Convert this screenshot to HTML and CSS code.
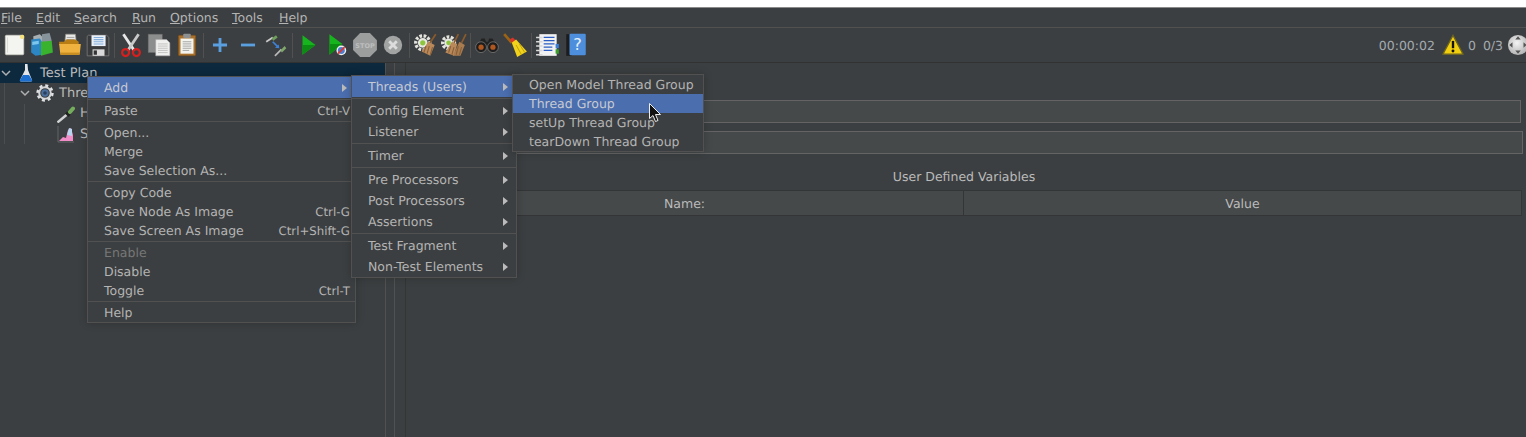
FILE: index.html
```html
<!DOCTYPE html>
<html lang="en">
<head>
    <meta charset="UTF-8">
    <title>Apache JMeter</title>
    <link rel="stylesheet" href="styles.css">
</head>
<body>
    <div class="topband"></div>

    <div class="menubar">
        <span class="m-file"><u>F</u>ile</span>
        <span class="m-edit"><u>E</u>dit</span>
        <span class="m-search"><u>S</u>earch</span>
        <span class="m-run"><u>R</u>un</span>
        <span class="m-options"><u>O</u>ptions</span>
        <span class="m-tools"><u>T</u>ools</span>
        <span class="m-help"><u>H</u>elp</span>
    </div>

    <div class="toolbar">
        <!-- new -->
        <div class="tool"><svg viewBox="0 0 24 24"><rect x="4" y="3" width="17" height="18" rx="1" fill="#f4f4f0" stroke="#cfcfc8" stroke-width=".6"/><circle cx="19.500" cy="4.500" r="2" fill="#f6e27a"/><path d="M6 5v14" stroke="#dcdcd6"/></svg></div>
        <!-- templates -->
        <div class="tool"><svg viewBox="0 0 24 24"><path d="M4 4l6-2 3 3v8H4z" fill="#a6aeb2"/><path d="M12 2l7-1 2 7-9 3z" fill="#87939a"/><path d="M2 7l8-1 2 3v12l-6 1-4-3z" fill="#2c86c4"/><path d="M11 9l10-1 1 11-11 3z" fill="#39b32e"/><path d="M3 9l6-1v3l-6 1z" fill="#7cc6ee"/></svg></div>
        <!-- open -->
        <div class="tool"><svg viewBox="0 0 24 24"><path d="M8 2h9l1 9H7z" fill="#e8e8e6" stroke="#8b8b85" stroke-width=".6"/><path d="M9 5h7M9 7h7" stroke="#999" stroke-width=".8"/><path d="M2 9h5l1-2h9l3 2v3H2z" fill="#b87e14"/><path d="M2 11h20l-1 9a1 1 0 0 1-1 1H4a1 1 0 0 1-1-1z" fill="#efb23e"/><path d="M3 19h18v2H3z" fill="#c98d20"/></svg></div>
        <!-- save -->
        <div class="tool"><svg viewBox="0 0 24 24"><path d="M3 3h17l2 2v17H2V4z" fill="#3a3b3d" stroke="#8a8a8a" stroke-width=".6"/><rect x="6" y="3" width="13" height="10" fill="#e9f0f8"/><path d="M8 5h9M8 7h9M8 9h9M8 11h9" stroke="#86aedb"/><rect x="7" y="16" width="11" height="6" fill="#d9d9d9"/><rect x="8" y="17" width="3" height="4" fill="#333"/></svg></div>
        <div class="tsep"></div>
        <!-- cut -->
        <div class="tool"><svg viewBox="0 0 24 24"><path d="M5 2l10 15" stroke="#e8e8e8" stroke-width="2.600"/><path d="M19 2L9 17" stroke="#c9c9c9" stroke-width="2.600"/><circle cx="7" cy="19" r="3.200" fill="none" stroke="#d81f1f" stroke-width="2"/><circle cx="17" cy="19" r="3.200" fill="none" stroke="#d81f1f" stroke-width="2"/></svg></div>
        <!-- copy -->
        <div class="tool"><svg viewBox="0 0 24 24"><rect x="2" y="2" width="13" height="17" fill="#8c8e8e" stroke="#666" stroke-width=".5"/><path d="M9 7h10l3 3v12H9z" fill="#f0f0ee" stroke="#aaa" stroke-width=".5"/><path d="M11 11h9M11 13h9M11 15h9M11 17h9M11 19h9" stroke="#b5b5b5" stroke-width=".7"/></svg></div>
        <!-- paste -->
        <div class="tool"><svg viewBox="0 0 24 24"><rect x="4" y="3" width="16" height="19" rx="1" fill="#a9702c" stroke="#6e4716" stroke-width=".5"/><rect x="6" y="6" width="12" height="14" fill="#f3f3f0"/><rect x="8.500" y="1.500" width="7" height="4" rx="1" fill="#8d9090"/><path d="M8 9h8M8 11h8M8 13h8M8 15h8M8 17h6" stroke="#9a9a9a" stroke-width=".8"/></svg></div>
        <div class="tsep"></div>
        <!-- expand -->
        <div class="tool"><svg viewBox="0 0 24 24"><path d="M12 5.500v13M5.500 12h13" stroke="#5a9fe0" stroke-width="2.600"/></svg></div>
        <!-- collapse -->
        <div class="tool"><svg viewBox="0 0 24 24"><path d="M5.500 12h13" stroke="#5a9fe0" stroke-width="2.600"/></svg></div>
        <!-- toggle -->
        <div class="tool"><svg viewBox="0 0 24 24"><path d="M3 9l6-4" stroke="#c9c9c9" stroke-width="1.600"/><path d="M8 6l4-3 1.500 2-4 3z" fill="#6f9f5c"/><path d="M11 22l6-6" stroke="#b9b9b9" stroke-width="1.600"/><path d="M16 17l4-4 1.500 2-4 4z" fill="#7fa96c"/><path d="M9 9l5 5" stroke="#3d82d6" stroke-width="1.600"/><path d="M15 15l-4-.500 3.500-3z" fill="#3d82d6"/></svg></div>
        <div class="tsep"></div>
        <!-- start -->
        <div class="tool"><svg viewBox="0 0 24 24"><path d="M6 3l12 9-12 9z" fill="#17b51d"/><path d="M6 12h12L6 21z" fill="#0d8c14"/></svg></div>
        <!-- start no pauses -->
        <div class="tool"><svg viewBox="0 0 24 24"><path d="M5 2l12 9-12 10z" fill="#17b51d"/><path d="M5 11h12L5 21z" fill="#0d8c14"/><circle cx="16" cy="17" r="4.500" fill="#f2f2f2"/><circle cx="16" cy="17" r="3.200" fill="#4c7fd0"/><path d="M13 20l6-6" stroke="#e0342c" stroke-width="1.500"/></svg></div>
        <!-- stop -->
        <div class="tool"><svg viewBox="0 0 24 24"><path d="M7.500 1h9L23 7.500v9L16.500 23h-9L1 16.500v-9z" fill="#9c9e9e"/><text x="12" y="14.500" class="stoptext">STOP</text></svg></div>
        <!-- shutdown -->
        <div class="tool"><svg viewBox="0 0 24 24"><circle cx="12" cy="12" r="8.500" fill="#a2a4a4"/><path d="M8.500 8.500l7 7M15.500 8.500l-7 7" stroke="#dcdcdc" stroke-width="2.600"/></svg></div>
        <div class="tsep"></div>
        <!-- clear -->
        <div class="tool"><svg viewBox="0 0 24 24"><circle cx="9" cy="10" r="6.500" fill="none" stroke="#e4e4de" stroke-width="3" stroke-dasharray="2.500 1.400"/><circle cx="9" cy="10" r="4.500" fill="#e8e8e2"/><circle cx="9" cy="10" r="2.400" fill="#8cc63f"/><path d="M21 2l-6 9" stroke="#8a5a2c" stroke-width="1.600"/><path d="M14 9l6 3-4 10-8-4z" fill="#b9895a"/><path d="M12 13l-2 6M15 13l-2 7M18 14l-2 7" stroke="#8a5f38"/></svg></div>
        <!-- clear all -->
        <div class="tool"><svg viewBox="0 0 24 24"><circle cx="7" cy="10" r="5.500" fill="none" stroke="#e4e4de" stroke-width="3" stroke-dasharray="2.500 1.400"/><circle cx="7" cy="10" r="4" fill="#e8e8e2"/><circle cx="7" cy="10" r="2.200" fill="#8cc63f"/><path d="M16 2l-4 8M23 2l-4 8" stroke="#8a5a2c" stroke-width="1.600"/><path d="M10 9l5 2-3 11-8-3z" fill="#b9895a"/><path d="M17 9l5 3-4 10-7 0z" fill="#a97c50"/><path d="M9 13l-2 6M12 14l-2 7M16 13l-2 8M19 14l-2 7" stroke="#8a5f38"/></svg></div>
        <div class="tsep"></div>
        <!-- search -->
        <div class="tool"><svg viewBox="0 0 24 24"><path d="M7 6h3l1 3h2l1-3h3l5 8H2z" fill="#222"/><circle cx="6.500" cy="14" r="5" fill="#1e1e1e" stroke="#8a8a8a" stroke-width=".6"/><circle cx="17.500" cy="14" r="5" fill="#1e1e1e" stroke="#8a8a8a" stroke-width=".6"/><circle cx="6.500" cy="14" r="2.400" fill="#b0571f"/><circle cx="17.500" cy="14" r="2.400" fill="#b0571f"/></svg></div>
        <!-- reset search -->
        <div class="tool"><svg viewBox="0 0 24 24"><path d="M2 2l7 8" stroke="#9a6414" stroke-width="2.400"/><path d="M7 7l3-2 3 3-3 3z" fill="#d9342a"/><path d="M9 10l4-3 10 11-9 5z" fill="#f2d21a"/><path d="M13 12l5 9M16 11l5 8" stroke="#b79a0a" stroke-width=".8"/></svg></div>
        <div class="tsep"></div>
        <!-- function helper -->
        <div class="tool"><svg viewBox="0 0 24 24"><rect x="4" y="2" width="16" height="20" fill="#f2f2f2"/><path d="M1 5h6M1 9h6M1 13h6M1 17h6M1 21h6" stroke="#d8d8d8" stroke-width="1.400"/><path d="M8 5h10M8 8h10M8 11h10M8 14h8M8 17h8" stroke="#2a5cc4" stroke-width="1.300"/><rect x="19" y="11" width="3" height="4" fill="#3b7fd6"/><rect x="19" y="16" width="3" height="4" fill="#3aa02a"/></svg></div>
        <!-- help -->
        <div class="tool"><svg viewBox="0 0 24 24"><rect x="3" y="2" width="5" height="20" fill="#1c1c1c"/><rect x="6" y="1.500" width="15" height="20" rx="1" fill="#4d8fdd"/><text x="13.500" y="17" class="helptext">?</text></svg></div>

        <div class="status">
            <span class="time">00:00:02</span>
            <svg class="warn" viewBox="0 0 24 24"><path d="M12 1.500L23 22H1z" fill="#f2cf0e" stroke="#6d6420" stroke-width="1.400"/><path d="M12 7.500v8" stroke="#111" stroke-width="2.600"/><circle cx="12" cy="18.500" r="1.600" fill="#111"/></svg>
            <span class="warncount">0</span>
            <span class="threads">0/3</span>
            <svg class="remote" viewBox="0 0 24 24"><defs><radialGradient id="ball" cx=".45" cy=".4" r=".7"><stop offset="0" stop-color="#f4f4f4"/><stop offset="1" stop-color="#a9a9a9"/></radialGradient></defs><circle cx="12" cy="12" r="11" fill="url(#ball)"/><path d="M12 2.500l3 3.500H9zM12 21.500l3-3.500H9zM2.500 12L6 9v6zM21.500 12L18 9v6z" fill="#555"/></svg>
        </div>
    </div>

    <div class="main">
        <div class="tree">
            <div class="guide guide-a"></div>
            <div class="guide guide-b"></div>
            <div class="node selected">
                <svg class="twisty" viewBox="0 0 10 10"><path d="M1 3l4 4 4-4" fill="none" stroke="#aeb0b2" stroke-width="1.500"/></svg>
                <svg class="nicon" viewBox="0 0 18 18"><path d="M8 0h2.500l.500 6 4 10a1 1 0 0 1-1 1.500H4A1 1 0 0 1 3 16l5-10z" fill="#e4e6ea"/><path d="M6 11h6l3 5a1 1 0 0 1-1 1.500H4A1 1 0 0 1 3 16z" fill="#1d6fd0"/></svg>
                <span>Test Plan</span>
            </div>
            <div class="node depth1">
                <svg class="twisty" viewBox="0 0 10 10"><path d="M1 3l4 4 4-4" fill="none" stroke="#aeb0b2" stroke-width="1.500"/></svg>
                <svg class="nicon" viewBox="0 0 18 18"><circle cx="9" cy="9" r="7" fill="none" stroke="#dfe1e3" stroke-width="3.400" stroke-dasharray="2.800 2.700"/><circle cx="9" cy="9" r="5.800" fill="none" stroke="#d4d6d8" stroke-width="2"/><circle cx="9" cy="9" r="3.700" fill="#4a6f9c"/><circle cx="9" cy="9" r="1.800" fill="#2b3f5c"/></svg>
                <span>Thre</span>
            </div>
            <div class="node depth2">
                <svg class="nicon" viewBox="0 0 18 18"><path d="M.5 17.500L10 9.500" stroke="#cfd1d3" stroke-width="2.400"/><path d="M9 7.500l3.500 3.500" stroke="#222" stroke-width="3"/><path d="M13 7l3-3.500" stroke="#74ad5c" stroke-width="4" stroke-linecap="round"/></svg>
                <span>H</span>
            </div>
            <div class="node depth2">
                <svg class="nicon" viewBox="0 0 18 18"><path d="M1 1v16h16" fill="none" stroke="#6b6e70" stroke-width=".8"/><path d="M2 16l4-4 3 1 2-8 3-2 2 7v6z" fill="#f08cc8"/><path d="M10 10l2-7 3 1v7z" fill="#b8d4ee"/></svg>
                <span>S</span>
            </div>
        </div>

        <div class="gutter"></div>

        <div class="panel">
            <div class="field field-name"></div>
            <div class="field field-comments"></div>
            <div class="tabletitle">User Defined Variables</div>
            <div class="tablehead">
                <div class="col">Name:</div>
                <div class="col">Value</div>
            </div>
        </div>
    </div>

    <!-- context menu -->
    <div class="menu menu-main">
        <div class="item tall active"><span>Add</span><i class="arrow"></i></div>
        <div class="sep"></div>
        <div class="item"><span>Paste</span><em>Ctrl-V</em></div>
        <div class="sep"></div>
        <div class="item"><span>Open...</span></div>
        <div class="item"><span>Merge</span></div>
        <div class="item"><span>Save Selection As...</span></div>
        <div class="sep"></div>
        <div class="item"><span>Copy Code</span></div>
        <div class="item"><span>Save Node As Image</span><em>Ctrl-G</em></div>
        <div class="item"><span>Save Screen As Image</span><em>Ctrl+Shift-G</em></div>
        <div class="sep"></div>
        <div class="item disabled"><span>Enable</span></div>
        <div class="item"><span>Disable</span></div>
        <div class="item"><span>Toggle</span><em>Ctrl-T</em></div>
        <div class="sep"></div>
        <div class="item"><span>Help</span></div>
    </div>

    <div class="menu menu-add">
        <div class="item tall active"><span>Threads (Users)</span><i class="arrow"></i></div>
        <div class="sep"></div>
        <div class="item tall"><span>Config Element</span><i class="arrow"></i></div>
        <div class="item tall"><span>Listener</span><i class="arrow"></i></div>
        <div class="sep"></div>
        <div class="item tall"><span>Timer</span><i class="arrow"></i></div>
        <div class="sep"></div>
        <div class="item tall"><span>Pre Processors</span><i class="arrow"></i></div>
        <div class="item tall"><span>Post Processors</span><i class="arrow"></i></div>
        <div class="item tall"><span>Assertions</span><i class="arrow"></i></div>
        <div class="sep"></div>
        <div class="item tall"><span>Test Fragment</span><i class="arrow"></i></div>
        <div class="item tall"><span>Non-Test Elements</span><i class="arrow"></i></div>
    </div>

    <div class="menu menu-threads">
        <div class="item"><span>Open Model Thread Group</span></div>
        <div class="item active"><span>Thread Group</span></div>
        <div class="item"><span>setUp Thread Group</span></div>
        <div class="item"><span>tearDown Thread Group</span></div>
    </div>

    <svg class="cursor" viewBox="0 0 12 20"><path d="M.5.5v15l3.500-3 2.500 6 2.500-1-2.500-6h5z" fill="#111" stroke="#eee" stroke-width="1"/></svg>
</body>
</html>
```

FILE: styles.css
```css
* {
    box-sizing: border-box;
}
html, body {
    height: 100%;
}
body {
    margin: 0;
    display: flex;
    flex-direction: column;
    overflow: hidden;
    background-color: #3c3f41;
    color: #bbbbbb;
    font-family: "DejaVu Sans", sans-serif;
    font-size: 12.500px;
    text-rendering: geometricPrecision;
}
svg {
    display: block;
}

.topband {
    height: 8px;
    flex: none;
    background: #fff;
    border-bottom: 1px solid #8a8a8a;
}

/* menu bar */
.menubar {
    display: flex;
    flex: none;
    height: 20px;
    align-items: center;
    padding-left: 1px;
    border-bottom: 1px solid #515151;
    color: #b4b4b4;
}
.m-file { width: 35px; }
.m-edit { width: 38px; }
.m-search { width: 58px; }
.m-run { width: 38px; }
.m-options { width: 62px; }
.m-tools { width: 47px; }

/* tool bar */
.toolbar {
    display: flex;
    flex: none;
    height: 35px;
    align-items: center;
    border-bottom: 1px solid #323232;
}
.tool {
    display: flex;
    width: 28px;
    justify-content: center;
}
.tool svg {
    width: 26px;
    height: 26px;
}
.tsep {
    width: 3px;
    height: 25px;
    margin-left: 2px;
    flex: none;
    border-left: 1px solid #515151;
}
.stoptext {
    font-size: 6px;
    font-weight: bold;
    fill: #bcbebe;
    text-anchor: middle;
}
.helptext {
    font-size: 15px;
    fill: #e8f0fa;
    text-anchor: middle;
}
.status {
    display: flex;
    align-items: center;
    margin-left: auto;
    color: #a3aab0;
}
.time {
    margin-right: 7px;
}
.warn {
    width: 22px;
    height: 22px;
}
.warncount {
    margin-left: 4px;
}
.threads {
    margin-left: 7px;
}
.remote {
    width: 22px;
    height: 22px;
    margin-left: 4px;
    margin-right: -3px;
}

/* tree + right panel */
.main {
    display: flex;
    flex: 1;
    min-height: 0;
}
.tree {
    position: relative;
    width: 386px;
    flex: none;
    border-right: 1px solid #515151;
}
.node {
    display: flex;
    align-items: center;
    height: 20.300px;
    padding-left: 1px;
    font-size: 13px;
    white-space: nowrap;
}
.node.selected {
    background: #0d293e;
}
.depth1 {
    padding-left: 20px;
}
.depth2 {
    padding-left: 57px;
}
.twisty {
    width: 10px;
    height: 10px;
    margin-right: 6px;
}
.nicon {
    width: 18px;
    height: 18px;
    margin-right: 5px;
}
.guide {
    position: absolute;
    width: 1px;
    background: #4b4e50;
}
.guide-a {
    left: 4px;
    top: 20px;
    height: 61px;
}
.guide-b {
    left: 24px;
    top: 41px;
    height: 40px;
}
.gutter {
    width: 9px;
    flex: none;
    border-right: 1px solid #515151;
}
.panel {
    flex: 1;
    padding-top: 37px;
    margin-left: 10px;
    border-left: 1px solid #333536;
}

.field {
    height: 23px;
    margin-left: 80px;
    background: #45494a;
    border: 1px solid #646464;
}
.field-name {
    margin-right: 5px;
    margin-bottom: 8px;
}
.field-comments {
    margin-right: 3px;
}
.tabletitle {
    display: flex;
    align-items: center;
    justify-content: center;
    height: 36px;
    padding-top: 9px;
    margin-right: 4px;
}
.tablehead {
    display: grid;
    grid-template-columns: 557px 1fr;
    height: 26px;
    margin-right: 4px;
    background: #45494a;
    border-top: 1px solid #333536;
    border-bottom: 1px solid #333536;
    border-right: 1px solid #333536;
}
.col {
    display: flex;
    align-items: center;
    justify-content: center;
}
.col + .col {
    border-left: 1px solid #333536;
}

/* popup menus */
.menu {
    position: absolute;
    background: #3c3f41;
    border: 1px solid #515151;
    box-shadow: 0 0 8px rgba(0, 0, 0, 0.22);
    color: #b4b4b4;
}
.menu-main {
    left: 87px;
    top: 76px;
    width: 269px;
}
.menu-add {
    left: 351px;
    top: 75px;
    width: 166px;
}
.menu-threads {
    left: 512px;
    top: 74px;
    width: 192px;
}
.item {
    display: flex;
    align-items: center;
    justify-content: space-between;
    height: 19px;
    padding-left: 16px;
    padding-right: 5px;
    white-space: nowrap;
}
.item.tall {
    height: 21px;
}
.item.active {
    background: #4b6eaf;
    color: #c6cad2;
}
.item.disabled {
    color: #777777;
}
.item em {
    font-style: normal;
    font-size: 11.800px;
}
.sep {
    height: 1px;
    margin: 1px 0;
    background: #515151;
}
.arrow {
    width: 0;
    height: 0;
    margin-right: 3px;
    border-left: 5px solid #bbbbbb;
    border-top: 4.500px solid transparent;
    border-bottom: 4.500px solid transparent;
}
.cursor {
    position: absolute;
    left: 649px;
    top: 103px;
    width: 12px;
    height: 20px;
}
```
